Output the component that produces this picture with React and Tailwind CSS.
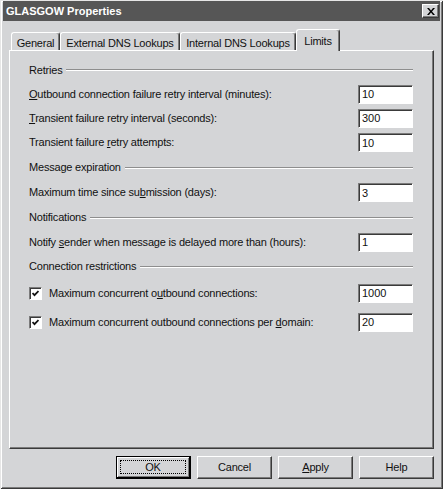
import React from 'react';

// classic win2k "Limits" property page

const Mn = ({ children }) => <span className="underline underline-offset-[1px]">{children}</span>;

function Field({ value }) {
  return (
    <div className="w-[55px] h-[19px] bg-white border border-t-[#7b7b7b] border-l-[#7b7b7b] border-r-white border-b-white shadow-[inset_1px_1px_#3a3a3a] pl-[3px] pt-[1px] flex items-center leading-none tracking-normal">
      {value}
    </div>
  );
}

function Section({ title, h }) {
  return (
    <div className={`${h} flex items-center`}>
      <span>{title}</span>
      <div className="flex-1 ml-[4px] h-[2px] border-t border-t-[#8e8e8e] border-b border-b-white" />
    </div>
  );
}

function Row({ label, value, h }) {
  return (
    <div className={`${h} flex items-center justify-between`}>
      <span>{label}</span>
      <Field value={value} />
    </div>
  );
}

function CheckRow({ label, value, h }) {
  return (
    <div className={`${h} flex items-center justify-between`}>
      <div className="flex items-center">
        <div className="w-[13px] h-[13px] bg-white border border-t-[#7b7b7b] border-l-[#7b7b7b] border-r-white border-b-white shadow-[inset_1px_1px_#3a3a3a] flex items-center justify-center">
          <svg width="7" height="7" viewBox="0 0 7 7">
            <path d="M0.5 3 L2.5 5.2 L6.5 1" fill="none" stroke="#111" strokeWidth="1.8" />
          </svg>
        </div>
        <span className="ml-[7px]">{label}</span>
      </div>
      <Field value={value} />
    </div>
  );
}

function Btn({ children, primary }) {
  if (primary) {
    return (
      <button className="w-[75px] h-[23px] bg-[#d4d5d7] border border-black border-b-2 border-r-2 shadow-[inset_1px_1px_#fff,inset_-1px_-1px_#7b7b7b] flex items-center justify-center p-[3px]">
        <span className="w-full h-full border border-dotted border-black flex items-center justify-center">{children}</span>
      </button>
    );
  }
  return (
    <button className="w-[75px] h-[23px] bg-[#d4d5d7] border border-t-white border-l-white border-r-[#3a3a3a] border-b-[#3a3a3a] shadow-[inset_-1px_-1px_#7b7b7b] flex items-center justify-center">
      {children}
    </button>
  );
}

function Tab({ children, w, selected }) {
  if (selected) {
    return (
      <div className={`${w} h-[22px] -mb-[1px] relative z-10 bg-[#d4d5d7] border-t border-l border-white border-r border-r-[#3a3a3a] shadow-[inset_-1px_0_#7b7b7b] rounded-t-[3px] flex justify-center pt-[3px]`}>
        {children}
      </div>
    );
  }
  return (
    <div className={`${w} h-[18px] bg-[#d4d5d7] border-t border-l border-white border-r border-r-[#3a3a3a] shadow-[inset_-1px_0_#7b7b7b] rounded-t-[3px] flex justify-center pt-[2px]`}>
      {children}
    </div>
  );
}

export default function App() {
  return (
    <div className="w-[443px] h-[489px] bg-[#d4d5d7] overflow-hidden text-[11px] text-[#111] font-['Liberation_Sans',Arial,sans-serif] shadow-[inset_1px_1px_#e6e6e6,inset_-1px_-1px_#3a3a3a,inset_2px_2px_#fff,inset_-2px_-2px_#7b7b7b] flex flex-col">
      {/* title bar */}
      <div className="mx-[3px] mt-[1px] h-[20px] bg-[#565656] flex items-center justify-between pl-[3px] pr-[1px]">
        <span className="text-white font-bold">GLASGOW Properties</span>
        <div className="w-[17px] h-[14px] bg-[#d4d5d7] border border-t-white border-l-white border-r-[#3a3a3a] border-b-[#3a3a3a] shadow-[inset_-1px_-1px_#7b7b7b] flex items-center justify-center">
          <svg width="8" height="7" viewBox="0 0 8 7">
            <path d="M0 0h2l2 2.4L6 0h2L5 3.5 8 7H6L4 4.6 2 7H0l3-3.5z" fill="#000" />
          </svg>
        </div>
      </div>

      <div className="tracking-[-0.2px]">
        {/* tabs */}
        <div className="ml-[9px] mt-[8px] h-[21px] flex items-end">
          <div className="w-[2px]" />
          <Tab w="w-[49px]">General</Tab>
          <Tab w="w-[120px]">External DNS Lookups</Tab>
          <Tab w="w-[116px]">Internal DNS Lookups</Tab>
          <Tab w="w-[44px]" selected>Limits</Tab>
        </div>

        {/* page */}
        <div className="ml-[9px] w-[425px] h-[399px] border-t border-l border-white border-r border-b border-r-[#3a3a3a] border-b-[#3a3a3a] shadow-[inset_-1px_-1px_#7b7b7b] pl-[19px] pr-[20px] pt-[7px] flex flex-col">
          <Section title="Retries" h="h-[24px]" />
          <Row h="h-[24px]" label={<><Mn>O</Mn>utbound connection failure retry interval (minutes):</>} value="10" />
          <Row h="h-[24px]" label={<><Mn>T</Mn>ransient failure retry interval (seconds):</>} value="300" />
          <Row h="h-[25px]" label={<>Transient failure <Mn>r</Mn>etry attempts:</>} value="10" />
          <Section title="Message expiration" h="h-[25px]" />
          <Row h="h-[25px]" label={<>Maximum time since su<Mn>b</Mn>mission (days):</>} value="3" />
          <Section title="Notifications" h="h-[25px]" />
          <Row h="h-[24px]" label={<>Notify <Mn>s</Mn>ender when message is delayed more than (hours):</>} value="1" />
          <Section title="Connection restrictions" h="h-[25px]" />
          <CheckRow h="h-[28px]" label={<>Maximum concurrent o<Mn>u</Mn>tbound connections:</>} value="1000" />
          <CheckRow h="h-[30px]" label={<>Maximum concurrent outbound connections per <Mn>d</Mn>omain:</>} value="20" />
        </div>

        {/* buttons */}
        <div className="mt-[7px] pr-[9px] flex justify-end gap-[6px]">
          <Btn primary>OK</Btn>
          <Btn>Cancel</Btn>
          <Btn><><Mn>A</Mn>pply</></Btn>
          <Btn>Help</Btn>
        </div>
      </div>
    </div>
  );
}
